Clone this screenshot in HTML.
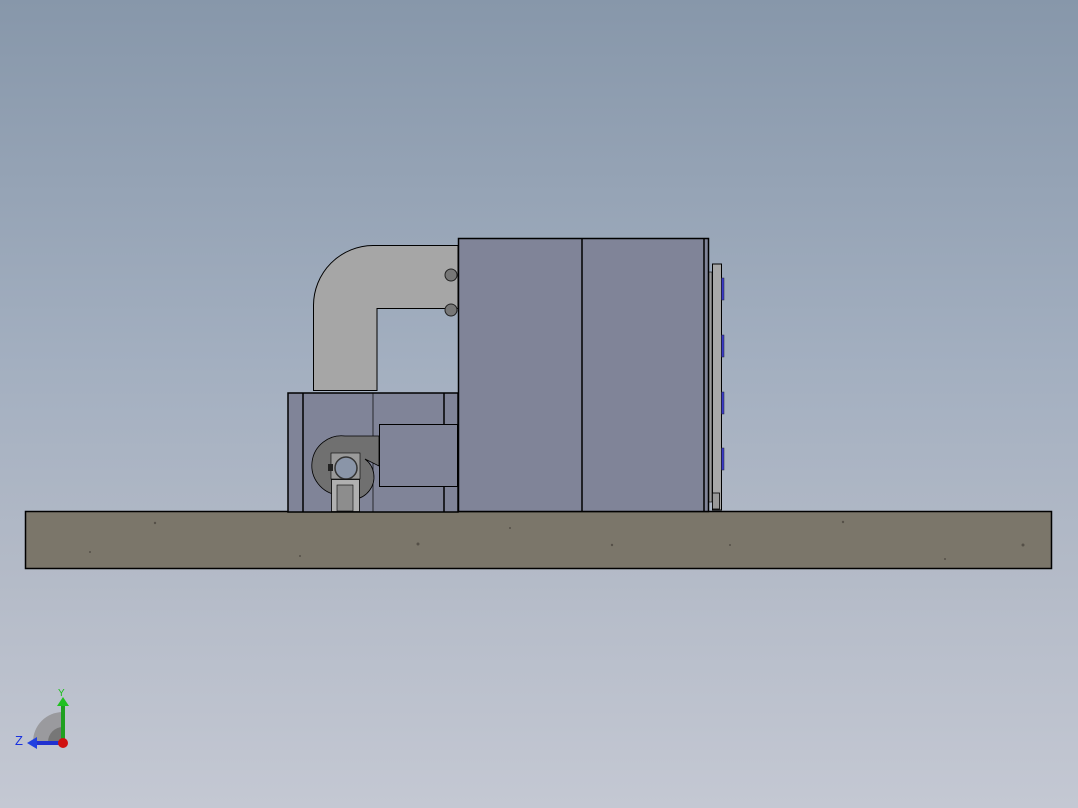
<!DOCTYPE html>
<html><head><meta charset="utf-8"><style>
html,body{margin:0;padding:0;width:1078px;height:808px;overflow:hidden}
body{background:linear-gradient(#8797aa 0%,#a3afc0 45%,#b3bac7 70%,#c4c8d3 100%)}
svg{position:absolute;left:0;top:0}
</style></head><body>
<svg width="1078" height="808" viewBox="0 0 1078 808" xmlns="http://www.w3.org/2000/svg">
<rect x="25.5" y="511.5" width="1026" height="57" fill="#7b766a" stroke="#000" stroke-width="1.5"/>
<g fill="#555048">
<circle cx="155" cy="523" r="1.2"/><circle cx="418" cy="544" r="1.5"/><circle cx="612" cy="545" r="1.2"/><circle cx="843" cy="522" r="1.2"/><circle cx="1023" cy="545" r="1.5"/><circle cx="945" cy="559" r="1"/><circle cx="90" cy="552" r="1"/><circle cx="730" cy="545" r="1"/><circle cx="510" cy="528" r="1"/><circle cx="300" cy="556" r="1"/>
</g>
<path d="M313.5 390.5 V305 A60 60 0 0 1 373 245.5 H458 V308.5 H377 V390.5 Z" fill="#a6a6a6" stroke="#000" stroke-width="1"/>
<g fill="#777" stroke="#222" stroke-width="1">
<circle cx="451" cy="275" r="6"/><circle cx="451" cy="310" r="6"/>
</g>
<rect x="288" y="393" width="170" height="119" fill="#808498" stroke="#000" stroke-width="1.5"/>
<line x1="303" y1="393" x2="303" y2="512" stroke="#000" stroke-width="1.5"/>
<line x1="373" y1="393" x2="373" y2="512" stroke="#000" stroke-width="0.7"/>
<line x1="444" y1="393" x2="444" y2="512" stroke="#000" stroke-width="1.5"/>
<path d="M345 436 H379 V466 L365 459 A22 22 0 0 1 338 495 A29 29 0 0 1 345 436Z" fill="#707070" stroke="#000" stroke-width="0.8"/>
<rect x="379.5" y="424.5" width="78" height="62" fill="#808498" stroke="#000" stroke-width="1"/>
<rect x="331" y="453" width="29" height="26" fill="#9a9a9a" stroke="#000" stroke-width="0.6"/>
<circle cx="346" cy="468" r="11" fill="#8a95a8" stroke="#333" stroke-width="1.5"/>
<rect x="328" y="464" width="5" height="7" fill="#222"/>
<rect x="331.5" y="479.5" width="28" height="32" fill="#b0b0b0" stroke="#000" stroke-width="0.8"/>
<rect x="337" y="485" width="16" height="26" fill="#8d8d8d" stroke="#000" stroke-width="0.6"/>
<rect x="458.5" y="238.5" width="250" height="273" fill="#808498" stroke="#000" stroke-width="1.5"/>
<line x1="582" y1="238" x2="582" y2="512" stroke="#000" stroke-width="1.5"/>
<line x1="704" y1="238" x2="704" y2="512" stroke="#000" stroke-width="1.5"/>
<rect x="712.5" y="264" width="9" height="246" fill="#a8a8a8" stroke="#000" stroke-width="1"/>
<rect x="709" y="272" width="3" height="230" fill="#9a9a9a" stroke="#000" stroke-width="0.6"/>
<g fill="#3a3ac8" stroke="#223" stroke-width="0.5">
<rect x="721.5" y="278" width="2.5" height="22"/><rect x="721.5" y="335" width="2.5" height="22"/><rect x="721.5" y="392" width="2.5" height="22"/><rect x="721.5" y="448" width="2.5" height="22"/>
</g>
<rect x="712.5" y="493" width="7" height="16" fill="#999" stroke="#000" stroke-width="0.8"/>
<path d="M33 742 A30 30 0 0 1 63 712 V742Z" fill="#9a9a9e"/>
<path d="M48 742 A15 15 0 0 1 63 727 V742Z" fill="#777"/>
<rect x="61" y="704" width="4" height="38" fill="#20a020"/>
<path d="M57 706 L63 697 L69 706Z" fill="#20c020"/>
<rect x="35" y="741" width="28" height="4" fill="#2030d0"/>
<path d="M37 737 L27 743 L37 749Z" fill="#2040e0"/>
<circle cx="63" cy="743" r="5" fill="#d01010"/>
<text x="58" y="696" font-family="Liberation Sans,sans-serif" font-size="10" fill="#18c018">Y</text>
<text x="15" y="745" font-family="Liberation Sans,sans-serif" font-size="13" fill="#1830e0">Z</text>
</svg>
</body></html>
